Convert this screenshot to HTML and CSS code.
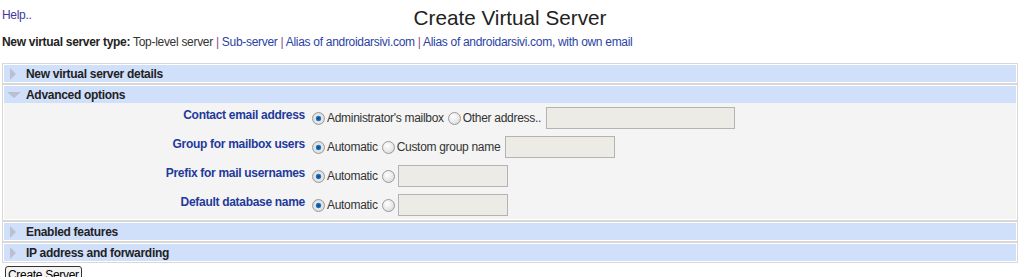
FILE: index.html
```html
<!DOCTYPE html>
<html lang="en">
<head>
    <meta charset="UTF-8">
    <title>Create Virtual Server</title>
    <link rel="stylesheet" href="styles.css">
</head>
<body>
    <div class="topbar">
        <a class="help" href="#">Help..</a>
        <h1>Create Virtual Server</h1>
        <span></span>
    </div>

    <p class="server-type">
        <b>New virtual server type:</b> Top-level server <span class="sep">|</span>
        <a href="#">Sub-server</a> <span class="sep">|</span>
        <a href="#">Alias of androidarsivi.com</a> <span class="sep">|</span>
        <a href="#">Alias of androidarsivi.com, with own email</a>
    </p>

    <form>
        <div class="section">
            <div class="section-head">
                <svg class="arrow" width="16" height="16" viewBox="0 0 16 16"><polygon points="4,2 10,8 4,14" fill="#b9c1d0"/></svg>
                New virtual server details
            </div>
        </div>

        <div class="section">
            <div class="section-head">
                <svg class="arrow" width="16" height="16" viewBox="0 0 16 16"><polygon points="1,5 15,5 8,11" fill="#b9c1d0"/></svg>
                Advanced options
            </div>
            <div class="section-body">
                <div class="row">
                    <label class="field-label">Contact email address</label>
                    <div class="opts">
                        <input type="radio" name="email" checked> <span>Administrator's mailbox</span>
                        <input type="radio" name="email"> <span>Other address..</span>
                        <input type="text" class="txt w-wide">
                    </div>
                </div>
                <div class="row">
                    <label class="field-label">Group for mailbox users</label>
                    <div class="opts">
                        <input type="radio" name="group" checked> <span>Automatic</span>
                        <input type="radio" name="group"> <span>Custom group name</span>
                        <input type="text" class="txt w-mid">
                    </div>
                </div>
                <div class="row">
                    <label class="field-label">Prefix for mail usernames</label>
                    <div class="opts">
                        <input type="radio" name="prefix" checked> <span>Automatic</span>
                        <input type="radio" name="prefix">
                        <input type="text" class="txt w-mid">
                    </div>
                </div>
                <div class="row">
                    <label class="field-label">Default database name</label>
                    <div class="opts">
                        <input type="radio" name="db" checked> <span>Automatic</span>
                        <input type="radio" name="db">
                        <input type="text" class="txt w-mid">
                    </div>
                </div>
            </div>
        </div>

        <div class="section">
            <div class="section-head">
                <svg class="arrow" width="16" height="16" viewBox="0 0 16 16"><polygon points="4,2 10,8 4,14" fill="#b9c1d0"/></svg>
                Enabled features
            </div>
        </div>

        <div class="section">
            <div class="section-head">
                <svg class="arrow" width="16" height="16" viewBox="0 0 16 16"><polygon points="4,2 10,8 4,14" fill="#b9c1d0"/></svg>
                IP address and forwarding
            </div>
        </div>

        <button type="submit" class="create">Create Server</button>
    </form>
</body>
</html>
```

FILE: styles.css
```css
* {
    box-sizing: border-box;
}

body {
    margin: 0;
    padding: 0 4px 0 2px;
    font-family: 'Liberation Sans', Arial, sans-serif;
    font-size: 12px;
    letter-spacing: -0.3px;
    color: #333;
    background: #fff;
}

a {
    color: #2b3fa6;
    text-decoration: none;
}

.topbar {
    display: grid;
    grid-template-columns: 1fr auto 1fr;
    padding-top: 6px;
}

.help {
    color: #3f3a9e;
    margin-top: 2px;
    line-height: 14px;
}

h1 {
    margin: 0;
    font-size: 20.7px;
    font-weight: normal;
    letter-spacing: 0;
    line-height: 24px;
    color: #222;
}

.server-type {
    margin: 5px 0 0;
    line-height: 14px;
}

.server-type b {
    color: #222;
}

.sep {
    color: #8a4a8e;
}

form {
    margin-top: 14px;
}

.section {
    border: 1px solid #dad8d5;
    padding: 1px;
    background: #fff;
}

.section-head {
    display: flex;
    align-items: center;
    height: 17px;
    background: #d0dffa;
    font-weight: bold;
    color: #222;
}

.arrow {
    margin: 0 4px 0 2px;
}

.section-body {
    background: #f4f4f4;
    padding: 4px 0 3px;
    display: grid;
    row-gap: 7px;
}

.row {
    display: grid;
    grid-template-columns: 301px auto;
    column-gap: 7px;
}

.field-label {
    text-align: right;
    font-weight: bold;
    color: #1f3a9c;
    line-height: 14px;
    padding-top: 1px;
}

.opts {
    display: flex;
    align-items: center;
    height: 22px;
    color: #333;
}

.opts input[type="radio"] {
    appearance: none;
    -webkit-appearance: none;
    width: 13px;
    height: 13px;
    margin: 0 2px 0 0;
    border: 1px solid #9a9a9a;
    border-radius: 50%;
    background: radial-gradient(circle at 40% 35%, #ffffff 0%, #e6e6e6 60%, #cfcfcf 100%);
}

.opts input[type="radio"]:checked {
    background: radial-gradient(circle at 50% 50%, #0b3e7a 0%, #1f78c4 28%, #2a7fc6 32%, #e8e8e8 40%, #d2d2d2 100%);
}

.opts span {
    margin-right: 4px;
}

.txt {
    height: 22px;
    margin-left: 1px;
    border: 1px solid #b3b3b3;
    background: #ecebe6;
    font: inherit;
}

.w-wide {
    width: 189px;
}

.w-mid {
    width: 110px;
}

.create {
    margin: 3px 0 0 3px;
    padding: 1px 2px;
    font-family: 'Liberation Sans', Arial, sans-serif;
    font-size: 12px;
    letter-spacing: -0.3px;
    color: #000;
    background: #f4f4f4;
    border: 1px solid #333;
    border-radius: 3px;
}
```
